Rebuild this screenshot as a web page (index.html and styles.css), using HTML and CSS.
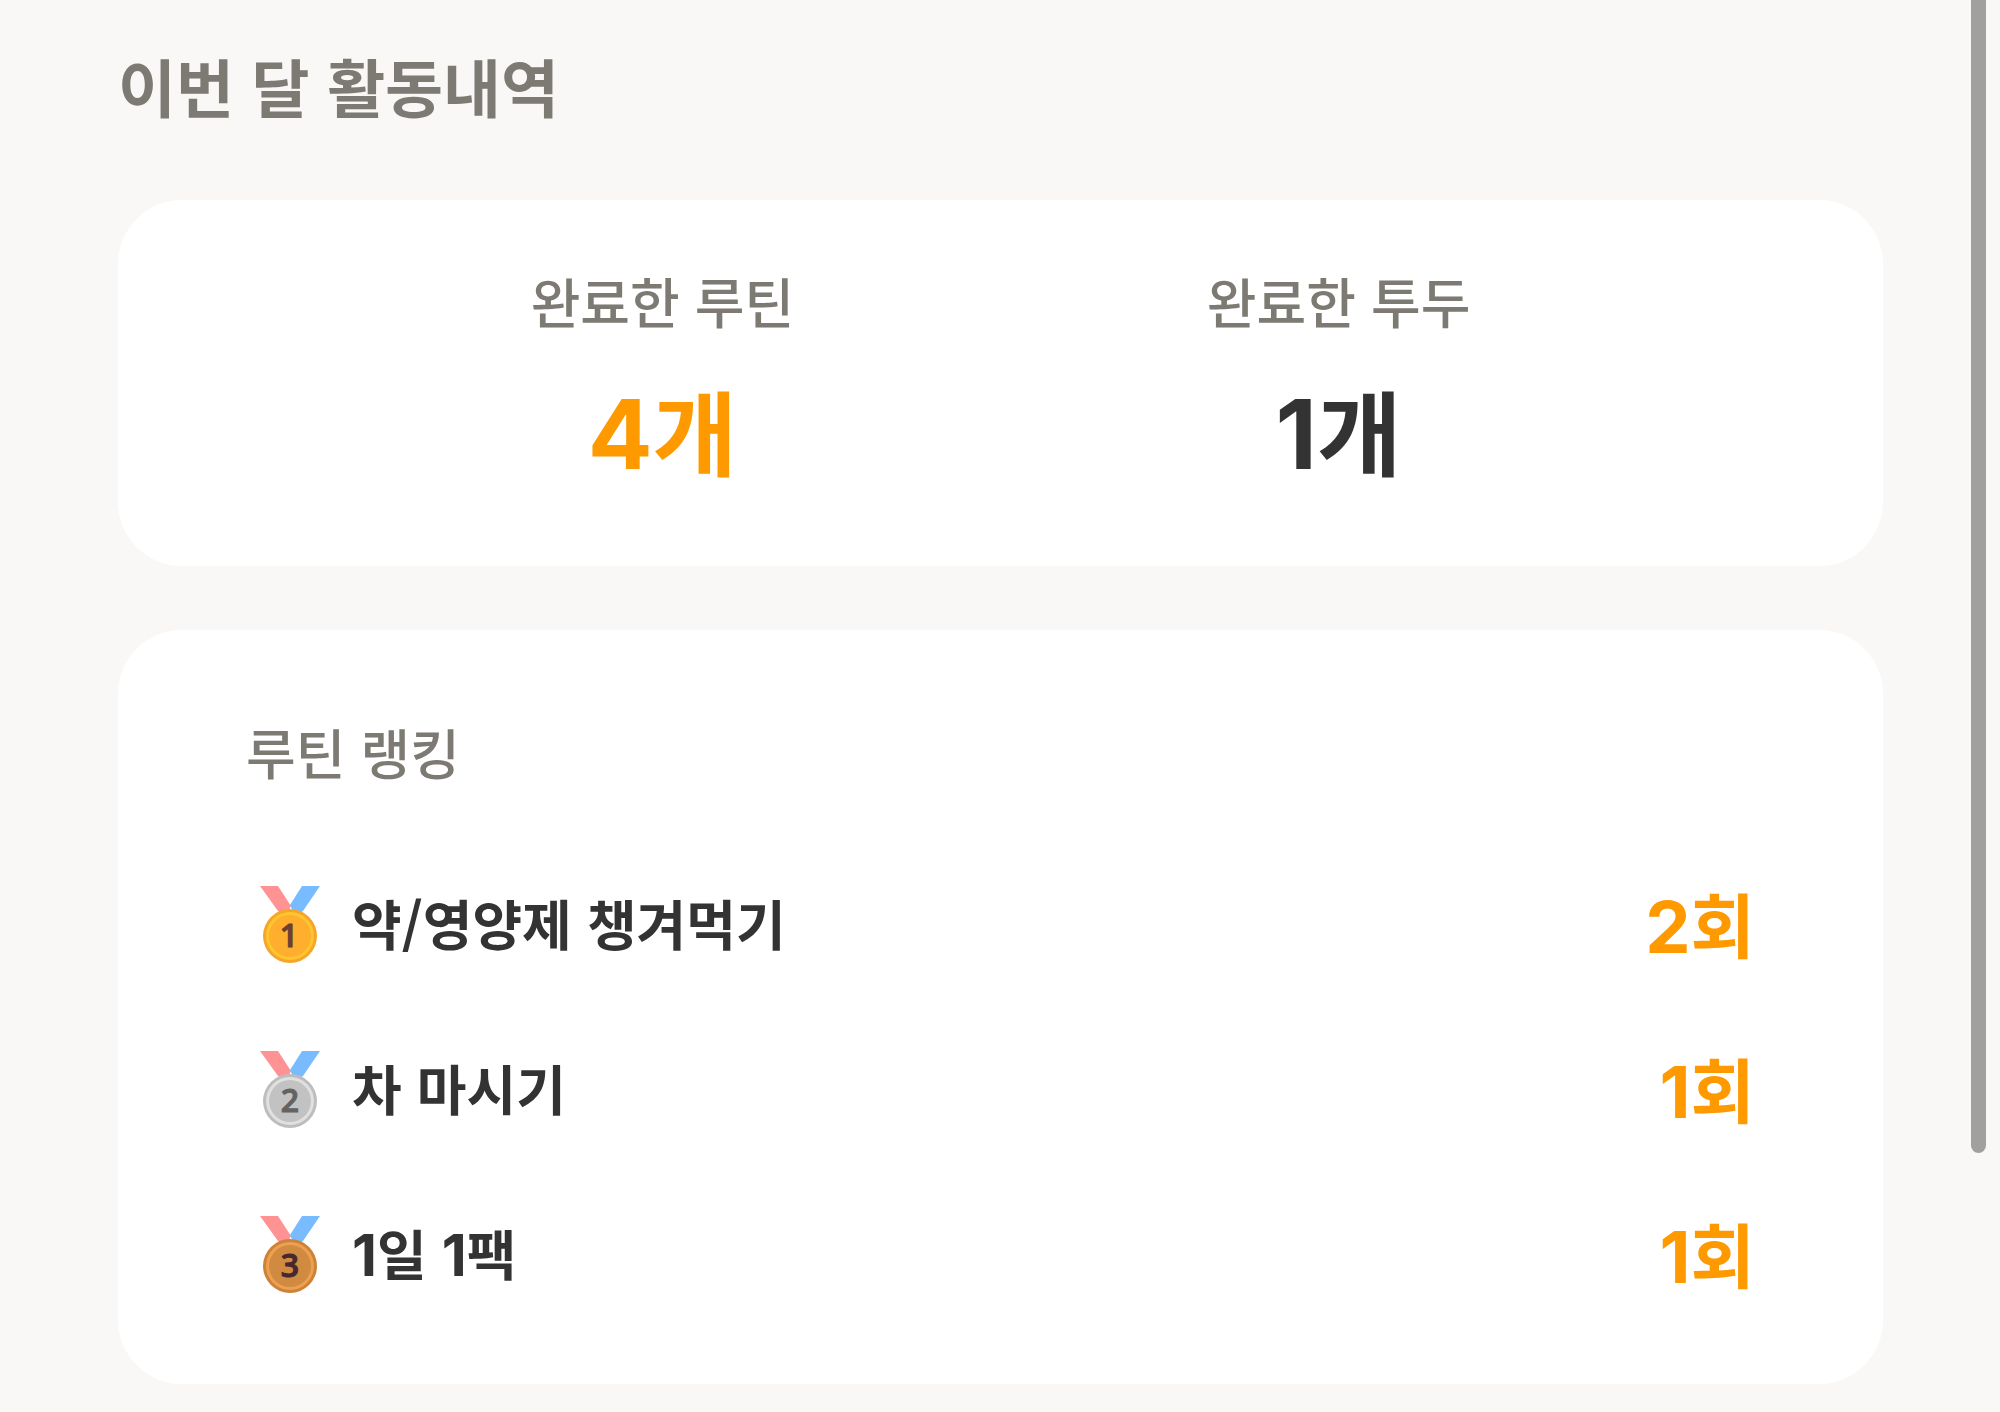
FILE: index.html
```html
<!DOCTYPE html>
<html lang="ko">
  <head>
    <meta charset="utf-8" />
    <meta name="viewport" content="width=device-width, initial-scale=1" />
    <title>이번 달 활동내역</title>
    <link rel="stylesheet" href="styles.css" />
  </head>
  <body>
    <main class="container">
      <h2 class="title">이번 달 활동내역</h2>

      <section class="card summary">
        <div class="summary-item">
          <p class="label">완료한 루틴</p>
          <p class="summary-value point"><span class="num">4</span>개</p>
        </div>
        <div class="summary-item">
          <p class="label">완료한 투두</p>
          <p class="summary-value"><span class="num">1</span>개</p>
        </div>
      </section>

      <section class="card ranking">
        <h3 class="label">루틴 랭킹</h3>
        <ol class="ranking-list">
          <li class="ranking-item">
            <svg class="medal gold" viewBox="0 0 60 78" aria-hidden="true">
              <path class="ribbon-left" d="M0 0h18l13 20-5 10-8-5z" />
              <path class="ribbon-right" d="M42 0h18L43 25l-8 5-5-11z" />
              <circle class="edge" cx="30" cy="50" r="27" />
              <circle class="ring" cx="30" cy="50" r="24" />
              <circle class="face" cx="30" cy="50" r="21" />
              <text x="29" y="61">1</text>
            </svg>
            <span class="ranking-name">약/영양제 챙겨먹기</span>
            <span class="ranking-count point"><span class="num">2</span>회</span>
          </li>
          <li class="ranking-item">
            <svg class="medal silver" viewBox="0 0 60 78" aria-hidden="true">
              <path class="ribbon-left" d="M0 0h18l13 20-5 10-8-5z" />
              <path class="ribbon-right" d="M42 0h18L43 25l-8 5-5-11z" />
              <circle class="edge" cx="30" cy="50" r="27" />
              <circle class="ring" cx="30" cy="50" r="24" />
              <circle class="face" cx="30" cy="50" r="21" />
              <text x="30" y="61">2</text>
            </svg>
            <span class="ranking-name">차 마시기</span>
            <span class="ranking-count point"><span class="num">1</span>회</span>
          </li>
          <li class="ranking-item">
            <svg class="medal bronze" viewBox="0 0 60 78" aria-hidden="true">
              <path class="ribbon-left" d="M0 0h18l13 20-5 10-8-5z" />
              <path class="ribbon-right" d="M42 0h18L43 25l-8 5-5-11z" />
              <circle class="edge" cx="30" cy="50" r="27" />
              <circle class="ring" cx="30" cy="50" r="24" />
              <circle class="face" cx="30" cy="50" r="21" />
              <text x="30" y="61">3</text>
            </svg>
            <span class="ranking-name"><span class="num">1</span>일 <span class="num">1</span>팩</span>
            <span class="ranking-count point"><span class="num">1</span>회</span>
          </li>
        </ol>
      </section>
    </main>
    <div class="scroll-thumb"></div>
  </body>
</html>
```

FILE: styles.css
```css
* {
  box-sizing: border-box;
}

body {
  margin: 0;
  background-color: #f9f8f6;
  color: #333333;
  font-family: "Noto Sans CJK KR", sans-serif;
}

h2,
h3,
p,
ol {
  margin: 0;
  padding: 0;
}

.container {
  padding: 45px 117px 28px 118px;
}

.title {
  margin-bottom: 75px;
  color: #7d7a73;
  font-size: 63px;
  font-weight: 700;
  line-height: 80px;
}

.card {
  margin-bottom: 64px;
  border-radius: 64px;
  background-color: #ffffff;
}

.card:last-child {
  margin-bottom: 0;
}

.label {
  color: #7d7a73;
  font-size: 54px;
  font-weight: 500;
  line-height: 72px;
}

.point {
  color: #ff9900;
}

/* zero line height keeps the latin digits from growing the line */
.num {
  font-family: Inter, sans-serif;
  line-height: 0;
}

.summary {
  display: flex;
  justify-content: space-evenly;
  padding: 65px 0 87px;
  text-align: center;
}

.summary-value {
  margin-top: 42px;
  font-size: 92px;
  font-weight: 700;
  line-height: 100px;
}

.summary-value .num {
  font-size: 96px;
}

.ranking {
  padding: 86px 128px 93px;
}

.ranking-list {
  display: flex;
  flex-direction: column;
  gap: 93px;
  margin-top: 101px;
  list-style: none;
}

.ranking-item {
  display: flex;
  align-items: center;
  height: 72px;
}

.medal {
  width: 60px;
  height: 78px;
  margin: 0 32px 0 14px;
}

.medal text {
  font-family: "Open Sans", sans-serif;
  font-size: 32px;
  font-weight: 600;
  text-anchor: middle;
  stroke-width: 1;
  stroke-linejoin: round;
}

.ribbon-left {
  fill: #ff9292;
}

.ribbon-right {
  fill: #78bcff;
}

.gold .edge {
  fill: #f6a52b;
}

.gold .ring {
  fill: #ffc52f;
}

.gold .face {
  fill: #ffae2e;
}

.gold text {
  fill: #6b4033;
  stroke: #6b4033;
}

.silver .edge {
  fill: #bdbdbd;
}

.silver .ring {
  fill: #e0e0e0;
}

.silver .face {
  fill: #c2c2c2;
}

.silver text {
  fill: #636363;
  stroke: #636363;
}

.bronze .edge {
  fill: #cc8339;
}

.bronze .ring {
  fill: #eda04f;
}

.bronze .face {
  fill: #d18b40;
}

.bronze text {
  fill: #46282f;
  stroke: #46282f;
}

.ranking-name {
  flex: 1;
  padding-bottom: 4px;
  font-size: 54px;
  font-weight: 700;
  line-height: 72px;
}

.ranking-name .num {
  font-size: 58px;
}

.ranking-count {
  padding-bottom: 4px;
  font-size: 70px;
  font-weight: 700;
  line-height: 72px;
}

.ranking-count .num {
  font-size: 72px;
}

/* overlay scrollbar at the right edge */
.scroll-thumb {
  position: absolute;
  top: 0;
  right: 14px;
  width: 15px;
  height: 1153px;
  border-radius: 0 0 8px 8px;
  background-color: #a1a09f;
}
```
